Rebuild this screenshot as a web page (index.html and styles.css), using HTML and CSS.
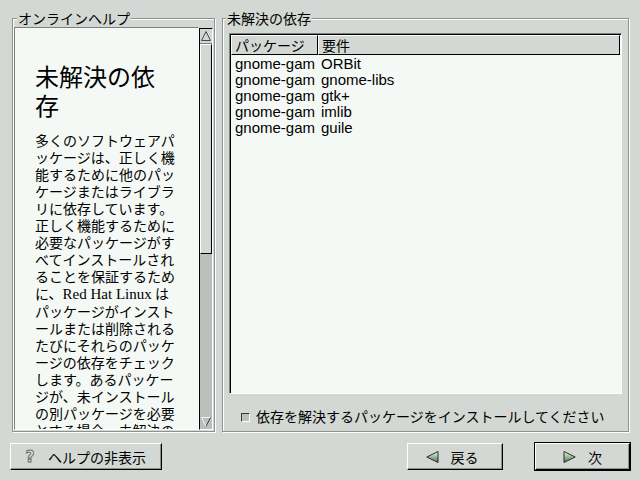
FILE: index.html
```html
<!DOCTYPE html>
<html lang="ja">
<head>
  <meta charset="UTF-8" />
  <title>未解決の依存</title>
  <link rel="stylesheet" href="styles.css">
</head>
<body>
  <div class="screen">
    <div class="panes">

      <fieldset class="frame help-frame">
        <legend>オンラインヘルプ</legend>
        <div class="help-scroll">
          <div class="help-text">
            <h1>未解決の依存</h1>
            <p>多くのソフトウェアパ<br>ッケージは、正しく機<br>能するために他のパッ<br>ケージまたはライブラ<br>リに依存しています。<br>正しく機能するために<br>必要なパッケージがす<br>べてインストールされ<br>ることを保証するため<br>に、<span class="latin">Red Hat Linux</span> は<br>パッケージがインスト<br>ールまたは削除される<br>たびにそれらのパッケ<br>ージの依存をチェック<br>します。あるパッケー<br>ジが、未インストール<br>の別パッケージを必要<br>とする場合、未解決の</p>
          </div>
          <div class="vscroll">
            <div class="sb-arrow sb-up">
              <svg width="12" height="12" viewBox="0 0 12 12"><polygon points="6,1.5 10.5,10.5 1.5,10.5" fill="#d4d8d4" stroke="#4a4a4a" stroke-width="1"/></svg>
            </div>
            <div class="sb-thumb"></div>
            <div class="sb-trough"></div>
            <div class="sb-arrow sb-down">
              <svg width="12" height="12" viewBox="0 0 12 12"><polygon points="1.5,1.5 10.5,1.5 6,10.5" fill="#bcbfbc" stroke="#f4f4f4" stroke-width="1"/><line x1="10.5" y1="1.5" x2="6" y2="10.5" stroke="#3a3a3a" stroke-width="1"/></svg>
            </div>
          </div>
        </div>
      </fieldset>

      <fieldset class="frame deps-frame">
        <legend>未解決の依存</legend>
        <div class="list">
          <div class="list-head">
            <div class="head-cell col-pkg">パッケージ</div>
            <div class="head-cell col-req">要件</div>
          </div>
          <div class="list-row"><span class="col-pkg">gnome-games</span><span class="col-req">ORBit</span></div>
          <div class="list-row"><span class="col-pkg">gnome-games</span><span class="col-req">gnome-libs</span></div>
          <div class="list-row"><span class="col-pkg">gnome-games</span><span class="col-req">gtk+</span></div>
          <div class="list-row"><span class="col-pkg">gnome-games</span><span class="col-req">imlib</span></div>
          <div class="list-row"><span class="col-pkg">gnome-games</span><span class="col-req">guile</span></div>
        </div>
        <label class="check"><span class="check-box"></span>依存を解決するパッケージをインストールしてください</label>
      </fieldset>

    </div>

    <div class="buttons">
      <button class="btn help-btn"><span class="q-icon">?</span>ヘルプの非表示</button>
      <span class="spacer"></span>
      <button class="btn nav-btn">
        <svg width="13" height="12" viewBox="0 0 13 12"><defs><linearGradient id="gb" x1="0" y1="0" x2="0" y2="1"><stop offset="0" stop-color="#f0f6f0"/><stop offset="1" stop-color="#3f7a44"/></linearGradient></defs><polygon points="12,0.5 12,11.5 0.8,6" fill="url(#gb)" stroke="#2c2c2c" stroke-width="1"/></svg>
        戻る
      </button>
      <button class="btn nav-btn default-btn">
        <svg width="13" height="12" viewBox="0 0 13 12"><defs><linearGradient id="gn" x1="0" y1="0" x2="0" y2="1"><stop offset="0" stop-color="#f0f6f0"/><stop offset="1" stop-color="#3f7a44"/></linearGradient></defs><polygon points="1,0.5 1,11.5 12.2,6" fill="url(#gn)" stroke="#2c2c2c" stroke-width="1"/></svg>
        次
      </button>
    </div>
  </div>
</body>
</html>
```

FILE: styles.css
```css
body {
  margin: 0;
  background-color: #d4d8d4;
  color: #000;
  font-family: "Noto Sans CJK JP", sans-serif;
  font-size: 14px;
}

.screen {
  width: 640px;
  height: 480px;
  display: flex;
  flex-direction: column;
}

.panes {
  display: flex;
  gap: 7px;
  padding: 10px 11px 0 12px;
  height: 422px;
}

/* etched frames */
.frame {
  box-sizing: border-box;
  height: 422px;
  margin: 0;
  border: 1px solid #8e928e;
  box-shadow: 1px 1px 0 #fff, inset 1px 1px 0 #fff;
}

.frame legend {
  font-size: 14px;
  line-height: 16px;
  padding: 0 1px;
  background-color: #d4d8d4;
}

.help-frame {
  width: 203px;
  padding: 1px 1px 0 1px;
}

.help-frame legend {
  margin-left: 3px;
}

.deps-frame {
  width: 407px;
  padding: 7px 6px 0 6px;
}

.deps-frame legend {
  margin-left: -3px;
}

/* help pane */
.help-scroll {
  display: flex;
  height: 403px;
}

.help-text {
  flex: 1;
  overflow: hidden;
  background-color: #f5f9f5;
  border-top: 1px solid #7d817d;
  border-left: 1px solid #7d817d;
  border-right: 1px solid #fff;
  border-bottom: 1px solid #fff;
  padding: 0 22px 0 20px;
}

.help-text h1 {
  margin: 33px 0 0 0;
  font-size: 24px;
  line-height: 29px;
  font-weight: normal;
}

.help-text p {
  margin: 13px 0 0 0;
  font-size: 14px;
  line-height: 17px;
  white-space: nowrap;
}

.latin {
  font-family: "Liberation Serif", serif;
  font-size: 15px;
}

.vscroll {
  width: 12px;
  display: flex;
  flex-direction: column;
  background-color: #bcbfbc;
  border: 1px solid #000;
  border-right-color: #fff;
  border-bottom-color: #fff;
  margin-top: 1px;
}

.sb-arrow {
  height: 14px;
  display: flex;
  align-items: center;
  justify-content: center;
}

.sb-up {
  background-color: #d4d8d4;
  border-bottom: 1px solid #7d817d;
}

.sb-thumb {
  height: 208px;
  background-color: #d4d8d4;
  border-top: 1px solid #fff;
  border-left: 1px solid #fff;
  border-bottom: 1px solid #000;
  border-right: 1px solid #000;
}

.sb-trough {
  flex: 1;
}

/* dependency list */
.list {
  box-sizing: border-box;
  height: 361px;
  background-color: #f5f9f5;
  border: 1px solid #7d817d;
  border-right-color: #fff;
  border-bottom-color: #fff;
  box-shadow: inset 1px 1px 0 #000;
  padding: 1px 0 0 1px;
  font-family: "Liberation Sans", sans-serif;
  font-size: 15px;
}

.list-head {
  display: flex;
  height: 20px;
  margin-bottom: 1px;
}

.head-cell {
  box-sizing: border-box;
  height: 20px;
  line-height: 18px;
  padding-left: 3px;
  background-color: #d4d8d4;
  font-family: "Noto Sans CJK JP", sans-serif;
  font-size: 14px;
  border: 1px solid #fff;
  border-right-color: #000;
  border-bottom-color: #000;
}

.list-head .col-pkg {
  width: 87px;
}

.list-head .col-req {
  flex: 1;
  margin-right: 1px;
}

.list-row {
  display: flex;
  height: 16px;
  line-height: 16px;
}

.list-row .col-pkg {
  width: 80px;
  margin-left: 4px;
  overflow: hidden;
  white-space: nowrap;
}

.list-row .col-req {
  margin-left: 6px;
}

.check {
  display: flex;
  align-items: center;
  gap: 6px;
  margin: 14px 0 0 12px;
  line-height: 16px;
}

.check-box {
  box-sizing: border-box;
  width: 9px;
  height: 9px;
  margin-top: 3px;
  background-color: #bcbfbc;
  border: 1px solid #3a3a3a;
  border-right-color: #fff;
  border-bottom-color: #fff;
}

/* bottom buttons */
.buttons {
  display: flex;
  align-items: flex-start;
  padding: 11px 10px 0 10px;
}

.spacer {
  flex: 1;
}

.btn {
  box-sizing: border-box;
  height: 27px;
  display: flex;
  align-items: center;
  background-color: #d4d8d4;
  font-family: "Noto Sans CJK JP", sans-serif;
  font-size: 14px;
  color: #000;
  border: 1px solid #fff;
  border-right-color: #000;
  border-bottom-color: #000;
  box-shadow: inset -1px -1px 0 #8e928e;
  padding: 0;
}

.help-btn {
  width: 152px;
  padding-left: 14px;
}

.q-icon {
  width: 10px;
  margin-right: 13px;
  font-family: "DejaVu Sans", sans-serif;
  font-size: 15px;
  font-weight: bold;
  color: #e8ece8;
  -webkit-text-stroke: 1px #6a6e6a;
}

.nav-btn {
  width: 96px;
  justify-content: center;
  gap: 12px;
  padding-right: 6px;
}

.default-btn {
  width: 95px;
  margin-left: 32px;
  outline: 1px solid #000;
  padding-right: 0;
}
```
